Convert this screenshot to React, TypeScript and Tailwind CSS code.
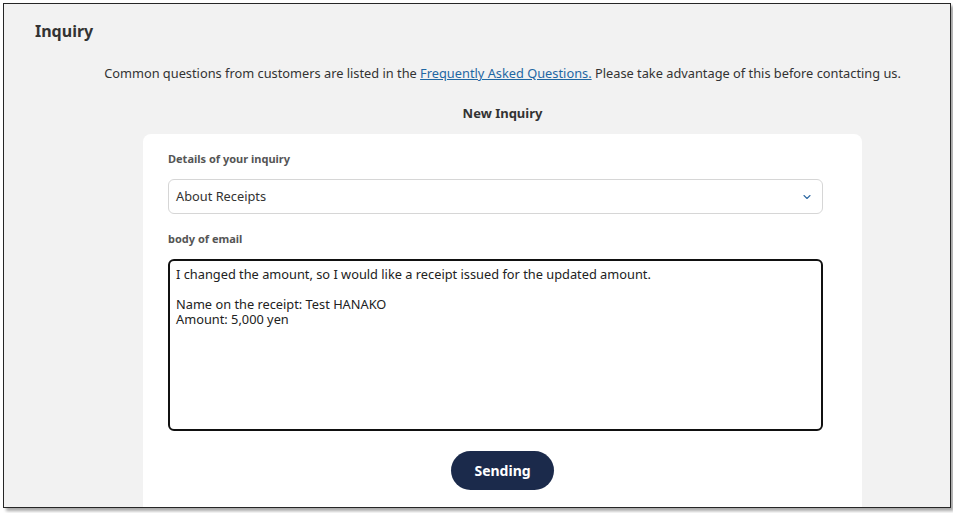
import { ChevronDown } from "lucide-react";

export default function App() {
  const body =
    "I changed the amount, so I would like a receipt issued for the updated amount.\n\nName on the receipt: Test HANAKO\nAmount: 5,000 yen";

  return (
    <div className="w-[953px] h-[513px] bg-white overflow-hidden font-['Noto_Sans',sans-serif] text-[#333]">
      <div className="ml-[3px] mt-[3px] w-[948px] h-[505px] border border-[#262626] bg-[#f2f2f2] shadow-[3px_3px_3px_rgba(0,0,0,0.35)] overflow-hidden">
        {/* Page title */}
        <h1 className="pl-[31px] pt-[15px] text-[16px] leading-6 font-bold text-[#333]">Inquiry</h1>

        <div className="ml-[51px] flex flex-col items-center">
          <p className="mt-[20px] text-[12.8px] leading-5 whitespace-nowrap">
            Common questions from customers are listed in the{" "}
            <a href="#" className="text-[#1f67a3] underline">Frequently Asked Questions.</a>{" "}
            Please take advantage of this before contacting us.
          </p>

          <h2 className="mt-[20px] text-[13px] leading-5 font-bold">New Inquiry</h2>

          {/* Form card */}
          <div className="mt-[11px] w-[719px] bg-white rounded-lg pl-[25px] pr-[39px] pt-[17px] pb-6">
            <label className="block text-[11px] leading-4 font-bold text-[#555]">Details of your inquiry</label>
            <div className="mt-[12px] h-[35px] flex items-center justify-between border border-[#d6d6d6] rounded-md pl-[7px] pr-[9px]">
              <span className="text-[12.8px]">About Receipts</span>
              <ChevronDown size={12} strokeWidth={2.2} className="text-[#2f6aa3]" />
            </div>

            <label className="block mt-[17px] text-[11px] leading-4 font-bold text-[#555]">body of email</label>
            <textarea
              readOnly
              defaultValue={body}
              className="mt-[12px] block w-full h-[172px] resize-none border-2 border-[#111] rounded-md px-[6px] pt-[6px] text-[12.8px] leading-[15px] text-[#222] outline-none font-['Noto_Sans',sans-serif]"
            />

            <div className="mt-[20px] -mr-[14px] flex justify-center">
              <button className="w-[103px] h-[39px] rounded-full bg-[#1b2a4b] text-white text-[14px] font-bold">
                Sending
              </button>
            </div>
          </div>
        </div>
      </div>
    </div>
  );
}
